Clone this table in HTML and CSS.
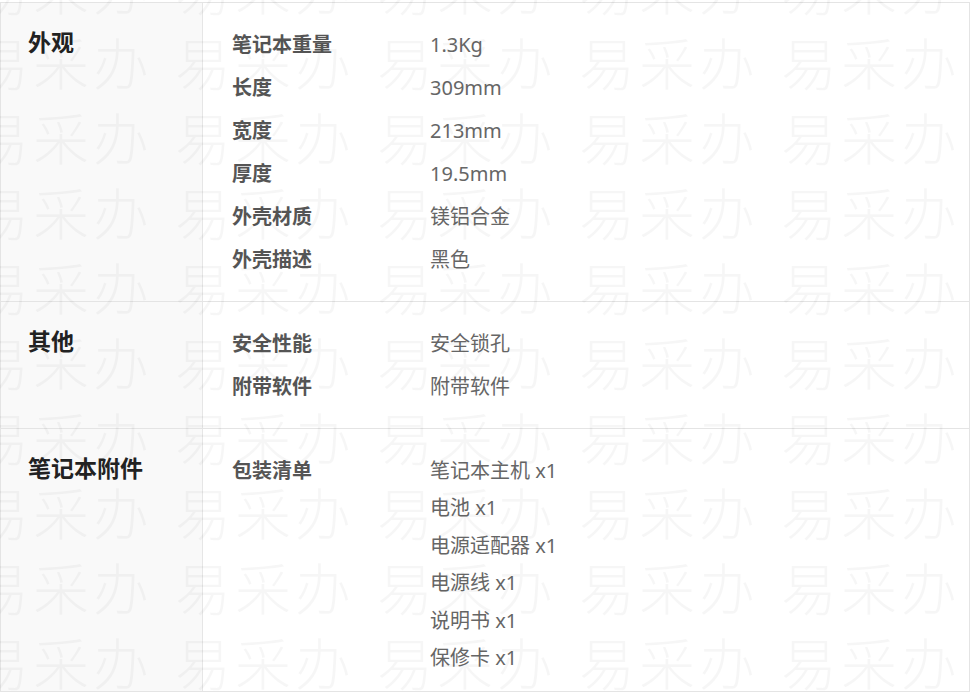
FILE: index.html
```html
<!DOCTYPE html>
<html lang="zh-CN">
<head>
<meta charset="utf-8">
<title>规格参数</title>
<link rel="stylesheet" href="styles.css">
</head>
<body>
<div class="spec">
  <section class="group">
    <div class="group-title">外观</div>
    <div class="group-body">
      <div class="row"><div class="key">笔记本重量</div><div class="val">1.3Kg</div></div>
      <div class="row"><div class="key">长度</div><div class="val">309mm</div></div>
      <div class="row"><div class="key">宽度</div><div class="val">213mm</div></div>
      <div class="row"><div class="key">厚度</div><div class="val">19.5mm</div></div>
      <div class="row"><div class="key">外壳材质</div><div class="val">镁铝合金</div></div>
      <div class="row"><div class="key">外壳描述</div><div class="val">黑色</div></div>
    </div>
  </section>
  <section class="group">
    <div class="group-title">其他</div>
    <div class="group-body">
      <div class="row"><div class="key">安全性能</div><div class="val">安全锁孔</div></div>
      <div class="row"><div class="key">附带软件</div><div class="val">附带软件</div></div>
    </div>
  </section>
  <section class="group group-last">
    <div class="group-title">笔记本附件</div>
    <div class="group-body">
      <div class="row"><div class="key">包装清单</div>
        <div class="val val-list">
          <div>笔记本主机 x1</div>
          <div>电池 x1</div>
          <div>电源适配器 x1</div>
          <div>电源线 x1</div>
          <div>说明书 x1</div>
          <div>保修卡 x1</div>
        </div>
      </div>
    </div>
  </section>
</div>
<div class="watermark" aria-hidden="true">
  <span>易采办</span><span>易采办</span><span>易采办</span><span>易采办</span><span>易采办</span>
  <span>易采办</span><span>易采办</span><span>易采办</span><span>易采办</span><span>易采办</span>
  <span>易采办</span><span>易采办</span><span>易采办</span><span>易采办</span><span>易采办</span>
  <span>易采办</span><span>易采办</span><span>易采办</span><span>易采办</span><span>易采办</span>
  <span>易采办</span><span>易采办</span><span>易采办</span><span>易采办</span><span>易采办</span>
  <span>易采办</span><span>易采办</span><span>易采办</span><span>易采办</span><span>易采办</span>
  <span>易采办</span><span>易采办</span><span>易采办</span><span>易采办</span><span>易采办</span>
  <span>易采办</span><span>易采办</span><span>易采办</span><span>易采办</span><span>易采办</span>
  <span>易采办</span><span>易采办</span><span>易采办</span><span>易采办</span><span>易采办</span>
  <span>易采办</span><span>易采办</span><span>易采办</span><span>易采办</span><span>易采办</span>
</div>
</body>
</html>
```
FILE: styles.css
```css
html, body {
  margin: 0;
  padding: 0;
  background: #fff;
}
body {
  position: relative;
  width: 970px;
  height: 695px;
  overflow: hidden;
  font-family: "Noto Sans", "Noto Sans CJK SC", sans-serif;
}
.spec {
  margin-top: 2px;
  width: 970px;
  box-sizing: border-box;
  border: 1px solid #e4e4e4;
}
.group {
  display: grid;
  grid-template-columns: 202px 1fr;
  border-top: 1px solid #e4e4e4;
}
.group:first-child {
  border-top: none;
}
.group-title {
  background: #f9f9f9;
  border-right: 1px solid #e6e6e6;
  padding: 20px 0 0 27px;
  font-size: 23px;
  line-height: 39px;
  font-weight: 700;
  color: #222;
}
.group-body {
  padding: 20px 0 20px 29px;
}
.group-last .group-body {
  padding-bottom: 12px;
}
.row {
  display: flex;
  padding: 3px 0;
  font-size: 20px;
  line-height: 37px;
}
.key {
  width: 198px;
  flex: none;
  font-weight: 700;
  color: #555;
}
.val {
  color: #666;
}
.val-list {
  line-height: 37.4px;
}
.watermark {
  position: absolute;
  left: -27px;
  top: -42px;
  display: grid;
  grid-template-columns: repeat(5, 202px);
  grid-auto-rows: 75px;
  pointer-events: none;
  font-family: "Noto Sans CJK SC", sans-serif;
  font-weight: 300;
  font-size: 56px;
  line-height: 56px;
  letter-spacing: 4px;
  white-space: nowrap;
  color: rgba(0, 0, 0, 0.036);
}
```
